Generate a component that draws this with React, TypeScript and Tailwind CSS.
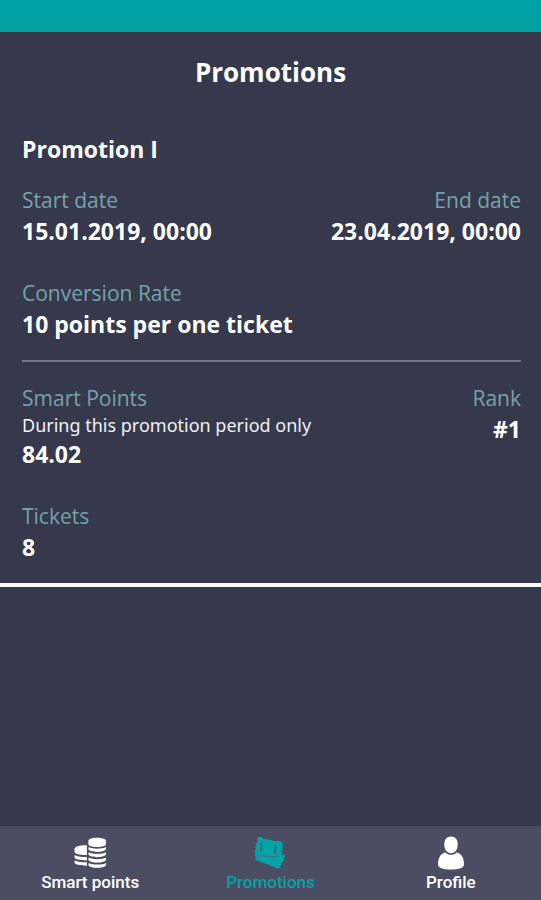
import type { ReactNode } from "react";

type FieldProps = {
  label: string;
  value: string;
  note?: string;
  align?: "left" | "right";
};

function Field({ label, value, note, align = "left" }: FieldProps) {
  return (
    <div className={align === "right" ? "text-right" : "text-left"}>
      <dt className="text-[21px] leading-[30px] text-[#75a3aa]">{label}</dt>
      {note && <dd className="font-['Noto_Sans',sans-serif] text-[18px] leading-[25px] text-[#f1f1f6]">{note}</dd>}
      <dd className="text-[23px] leading-8 font-bold text-white">{value}</dd>
    </div>
  );
}

function CoinsIcon() {
  return (
    <svg viewBox="0 0 34 34" className="size-[34px]" fill="currentColor" aria-hidden="true">
      <path d="M15.400 4.800C15.400 3 19 1.700 24 1.700S33 3 33 4.800v3.200c0 1.800-3.800 3-9 3s-8.600-1.200-8.600-3z" />
      <path d="M15.700 11c3.500 2.200 14 2.200 17.300 0v1.800c0 1.900-4 3.100-8.800 3.100s-8.800-1.200-8.800-3.100z" />
      <path d="M15.700 16.300c3.500 2.200 14 2.200 17.300 0v1.800c0 1.900-4 3.100-8.800 3.100s-8.800-1.200-8.800-3.100z" />
      <path d="M15.700 21.600c3.500 2.200 14 2.200 17.300 0v1.800c0 1.900-4 3.100-8.800 3.100s-8.800-1.200-8.800-3.100z" />
      <path d="M15.700 26.900c3.500 2.200 14 2.200 17.300 0v1.800c0 1.900-4 3.100-8.800 3.100s-8.800-1.200-8.800-3.100z" />
      <path d="M13.900 9.200v9.900C6.800 19.200 1.500 17.900 1.500 15.800V13c0-2.300 5.300-3.900 12.400-3.800z" />
      <path d="M1.500 19c2.400 1.500 7 2.100 12.400 2v3.400c-7.100.1-12.400-1.300-12.400-3.400z" />
      <path d="M1.500 24.300c2.400 1.500 7 2.100 12.400 2v3.400c-7.100.1-12.400-1.300-12.400-3.400z" />
    </svg>
  );
}

function TicketsIcon() {
  return (
    <svg viewBox="0 0 34 34" className="size-[34px]" aria-hidden="true">
      <path
        fill="currentColor"
        d="M4.500 1 8.500 1l.8 1.200L23 5.200l1.500-.6 5.300 1.600-.8 2.300 1.300 1.400-1.500 2 1 1.600-1.300 2 .8 1.700-.6 2 3.500-.8-.3 2.600-1.300.8.700 2-1.800 1 .4 1.700-1.700.7.500 1.700-1.500.7.300 2-2.200 1.200L2.200 23.600l-.3-1.700 1.800-.8-2-1.500.8-2.400-1-1.700 1.500-2-.9-1.900 1.500-1.900-.8-2 1.800-1.900z"
      />
      <g fill="none" stroke="#4b4e62" strokeLinecap="round">
        <path d="M5 19.700 19 20.700l7.500-.7" strokeWidth=".5" />
        <path d="M9 6.500 8 9l.3 3.500L7.500 15" strokeWidth="1.100" />
        <path d="m22.500 8.500.3 3-1 3 .2 3" strokeWidth="1.100" />
      </g>
    </svg>
  );
}

function ProfileIcon() {
  return (
    <svg viewBox="0 0 34 34" className="size-[34px]" fill="currentColor" aria-hidden="true">
      <path d="M17 .5c4.300 0 6.700 3 6.700 7.800 0 5.300-2.600 9-6.700 9s-6.700-3.700-6.700-9C10.300 3.500 12.700.5 17 .5z" />
      <path d="M11.300 16.500c1.600 1.600 3.300 2.300 5.700 2.300s4.100-.7 5.700-2.300c4.800 1.100 7.300 5.700 7.300 11.700 0 3.700-4.800 5.300-13 5.300S4 31.900 4 28.200c0-6 2.500-10.600 7.300-11.700z" />
    </svg>
  );
}

type TabProps = { label: string; icon: ReactNode; active?: boolean };

function Tab({ label, icon, active = false }: TabProps) {
  return (
    <button
      type="button"
      aria-current={active ? "page" : undefined}
      className={`flex flex-1 flex-col items-center pt-2.5 pb-1.5 ${active ? "text-[#05a3a5]" : "text-white"}`}
    >
      {icon}
      <span className="font-[Roboto,sans-serif] text-[17px] leading-6 font-medium">{label}</span>
    </button>
  );
}

export default function App() {
  return (
    <div className="flex min-h-screen flex-col bg-[#35394b] font-['Open_Sans','Noto_Sans',sans-serif]">
      <div className="h-8 bg-[#00a2a4]" />
      <header className="flex h-20 items-center justify-center">
        <h1 className="text-[26px] leading-9 font-bold text-white">Promotions</h1>
      </header>

      <main className="flex-1">
        <section className="border-b-4 border-white pt-[21px] pr-5 pb-5 pl-[22px]">
          <h2 className="text-[23px] leading-8 font-bold text-white">Promotion I</h2>
          <dl className="mt-5 flex justify-between">
            <Field label="Start date" value="15.01.2019, 00:00" />
            <Field label="End date" value="23.04.2019, 00:00" align="right" />
          </dl>
          <dl className="mt-[31px]">
            <Field label="Conversion Rate" value="10 points per one ticket" />
          </dl>
          <hr className="mt-5 mb-[21px] border-t-2 border-[#737687]" />
          <dl className="flex justify-between">
            <Field label="Smart Points" note="During this promotion period only" value="84.02" />
            <Field label="Rank" value="#1" align="right" />
          </dl>
          <dl className="mt-[31px]">
            <Field label="Tickets" value="8" />
          </dl>
        </section>
      </main>

      <nav aria-label="Main" className="flex bg-[#4b4e62]">
        <Tab label="Smart points" icon={<CoinsIcon />} />
        <Tab label="Promotions" icon={<TicketsIcon />} active />
        <Tab label="Profile" icon={<ProfileIcon />} />
      </nav>
    </div>
  );
}
